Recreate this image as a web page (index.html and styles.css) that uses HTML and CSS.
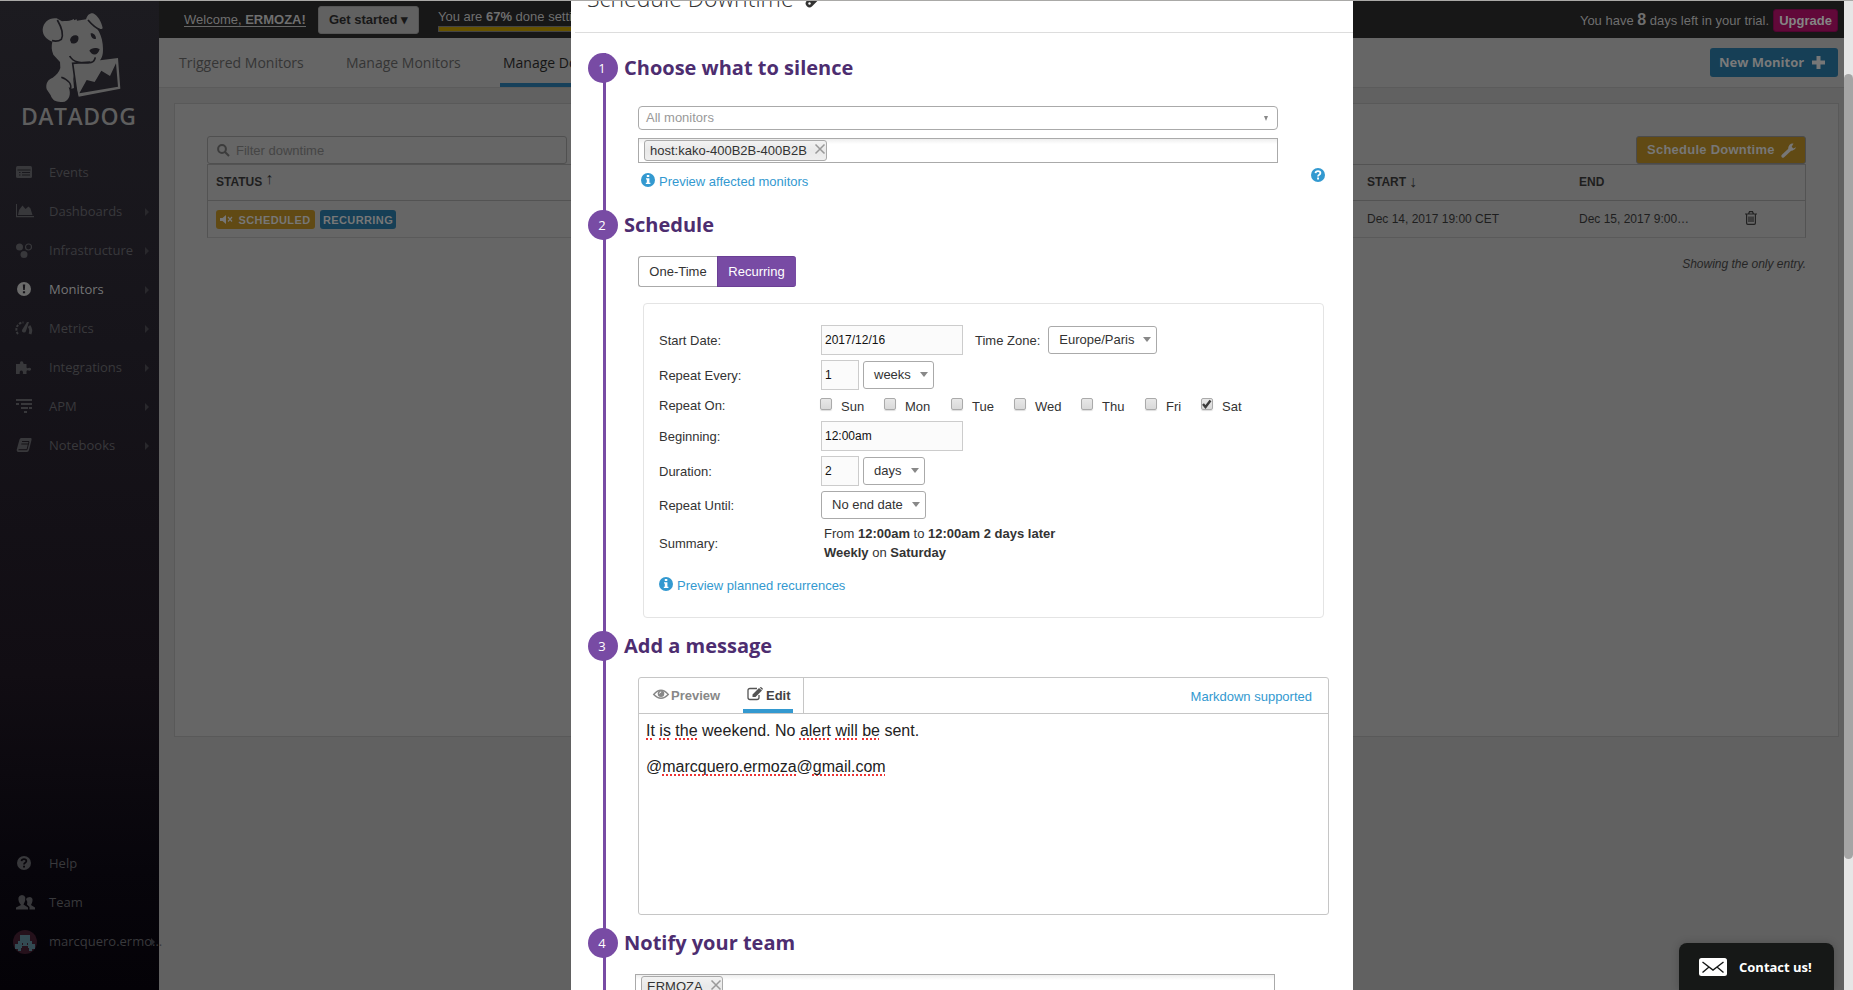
FILE: index.html
```
<!DOCTYPE html>
<html lang="en">
<head>
<meta charset="utf-8">
<title>Manage Downtime</title>
<link rel="stylesheet" href="styles.css">
</head>
<body>
<div class="app">
  <aside class="sidebar">
    <div class="brand">
      <svg class="dog" width="160" height="104" viewBox="0 0 480 312">
        <path fill="#5e5e5e" d="M128 88C130 66 148 52 170 55L186 64C196 62 205 64 215 60L222 57 222 61 230 58 231 62 258 58C262 46 268 39 279 40C293 46 305 66 308 84C306 90 298 86 290 84C300 98 306 114 308 132C310 154 310 168 300 181L354 174 361 266 236 290 219 226 222 264 215 266 206 262C214 282 208 300 194 305C172 308 158 304 152 286L140 268C136 250 144 238 158 233C168 226 178 216 181 204L180 186 160 164C154 150 154 138 157 125C138 118 128 106 128 88Z"/>
        <path fill="none" stroke="#1b1a1f" stroke-width="5" d="M172 60C186 84 190 106 184 118C176 124 166 124 156 122M264 60C274 72 286 84 302 90M184 232C206 240 216 254 211 268M209 168C218 186 244 192 274 187C280 186 284 180 286 172M232 291L218 190 270 186"/>
        <path fill="#1b1a1f" d="M210 120C212 106 228 102 235 110C238 126 226 132 214 130ZM272 100C280 98 288 106 288 116C280 120 272 112 272 100ZM268 152C274 142 290 142 299 147C296 162 284 168 274 160ZM238 280L260 240 284 246 304 212 330 228 348 190 354 260Z"/>
      </svg>
      <div class="wordmark">DATADOG</div>
    </div>
    <nav class="nav">
      <a class="item"><svg width="20" height="16"><rect x="0" y="1" width="16" height="12" rx="1.5"/><path d="M1.500 5h13M3 7.500h1.500M6 7.500h8M3 10h1.500M6 10h8" stroke="#19181d" fill="none"/></svg><span>Events</span></a>
      <a class="item more"><svg width="20" height="16"><path d="M0 0h1v12h17v1.200H0zM2 11L3 6 6.500 1.500 9.500 5 12.500 2.500 14.500 4.500 16.500 11z"/></svg><span>Dashboards</span></a>
      <a class="item more"><svg width="20" height="16"><circle cx="3.500" cy="4" r="3.500"/><circle cx="12.500" cy="4" r="3" fill="none" stroke="#38383b" stroke-width="1.200"/><circle cx="8" cy="11.500" r="3.500"/></svg><span>Infrastructure</span></a>
      <a class="item more active"><svg width="20" height="16"><circle cx="8" cy="7" r="7"/><path d="M6.800 2.500h2.400l-.4 5.500H7.200zM6.900 9.300h2.200v2H6.900z" fill="#17151a"/></svg><span>Monitors</span></a>
      <a class="item more"><svg width="20" height="16"><path d="M2 13A7 7 0 0 1 7.500 1.500" fill="none" stroke="#38383b" stroke-width="2" stroke-dasharray="2.500 1.200"/><path d="M13 5A8 8 0 0 1 14 13" fill="none" stroke="#38383b" stroke-width="3"/><path d="M11 1h2L10 10a2 2 0 0 1-4-1z"/></svg><span>Metrics</span></a>
      <a class="item more"><svg width="20" height="16"><path d="M0 4h3.500q1.200-.5.500-1.700A1.700 1.700 0 0 1 7.200 2.300Q6.800 3.500 8 4h2.500v3.500q.5 1.200 1.700.6 2.800-1 3 1.200-.5 2-2.700 1.200-1.500-.8-2 .8V14H7.300q-.8-.5-.3-1.500 0-2-1.700-2t-1.600 2q.5 1-.4 1.500H0z"/></svg><span>Integrations</span></a>
      <a class="item more"><svg width="20" height="16"><path d="M0 0h16v2H0zM0 4h3v2H0zM5 4h11v2H5zM5 8h7v2H5zM13 8h3v2h-3zM8 12h3v2H8z"/></svg><span>APM</span></a>
      <a class="item more"><svg width="20" height="16"><path d="M5 0h10q1 .5.500 2L13 12q-.5 2-2 2H2q-2-1-1-3.500L3.500 1.500Q4 0 5 0z"/><path d="M6 3.500h7M5.300 6h7M2.500 11.700h8.500l2-8" stroke="#151217" fill="none"/></svg><span>Notebooks</span></a>
    </nav>
    <nav class="nav bottom">
      <a class="item"><svg width="20" height="16"><circle cx="8" cy="7" r="7"/><path d="M5.500 5.200q.2-2 2.500-2t2.400 1.900q0 1-1.200 1.700T8 8.600" stroke="#08060b" stroke-width="1.700" fill="none"/><path d="M7.100 9.700H9v1.800H7.100z" fill="#08060b"/></svg><span>Help</span></a>
      <a class="item"><svg width="20" height="16"><path d="M0 14.500v-2l5-2.500C3 8 2 5 2.500 2.500Q3.200 0 6 0t3.300 2.500Q9.800 6 7.500 9.500l4.500 3v2zM10 4q1-2 4-2 3 .5 2.500 4-.5 2.500-1.500 4l4 2.500v2h-5.500V12L11 9.500Q12 7 10 4z"/></svg><span>Team</span></a>
      <a class="item more user"><svg class="avatar" width="24" height="24"><circle cx="12" cy="12" r="12" fill="#25111b"/><path fill="#334a52" d="M7 5h10v6h2v3h3v5h-3v2h-3v-3h-1v-2H9v2H8v3H5v-2H2v-5h3v-3h2z"/><path fill="#25111b" d="M9 13h1v2H9zM14 13h1v2h-1z"/></svg><span>marcquero.ermo...</span></a>
    </nav>
  </aside>

  <main class="main">
    <header class="topbar">
      <a class="welcome">Welcome, <b>ERMOZA!</b></a>
      <span class="started">Get started ▾</span>
      <div class="setup"><span>You are <b>67%</b> done setting up</span><div class="progress"></div></div>
      <div class="trial">You have <b>8</b> days left in your trial.</div>
      <span class="upgrade">Upgrade</span>
    </header>
    <div class="tabs">
      <a class="t1">Triggered Monitors</a><a class="t2">Manage Monitors</a><a class="t3">Manage Downtime</a>
      <span class="newmon">New Monitor <svg width="13" height="13"><path d="M4.500 0h4v4.500H13v4H8.500V13h-4V8.500H0v-4h4.500z" fill="#777"/></svg></span>
    </div>
    <section class="card">
      <div class="tools">
        <div class="filter"><svg width="13" height="13"><circle cx="5" cy="5" r="3.900"/><path d="M8 8l4 4"/></svg><span>Filter downtime</span></div>
        <span class="sched">Schedule Downtime <svg width="16" height="15"><path d="M2 13L9 6.500" stroke="#777" stroke-width="3.400" stroke-linecap="round"/><path d="M12.500.6A4.500 4.500 0 0 0 7.300 6 4.400 4.400 0 0 0 15 4.200L12.300 5.500 10.700 3.800z" fill="#777"/></svg></span>
      </div>
      <div class="row head"><div class="c1">STATUS <span class="arr up">↑</span></div><div class="c2">START <span class="arr">↓</span></div><div class="c3">END</div></div>
      <div class="row body">
        <div class="c1"><span class="badge gold"><svg width="14" height="10"><path d="M0 3h2.500L6 0v9L2.500 6H0z" fill="#777"/><path d="M8 2l4 4.500M12 2L8 6.500" stroke="#777" stroke-width="1.200"/></svg>SCHEDULED</span><span class="badge blue">RECURRING</span></div>
        <div class="c2">Dec 14, 2017 19:00 CET</div><div class="c3">Dec 15, 2017 9:00…</div>
        <div class="c4"><svg width="12" height="14" fill="none" stroke="#222" stroke-width="1.200"><path d="M0 3h12M3.500 3l1-2.300h3l1 2.300M1.600 3v9q0 1.400 1.200 1.400h6.400q1.200 0 1.200-1.400V3M4 5.500V11M6 5.500V11M8 5.500V11"/></svg></div>
      </div>
      <div class="only">Showing the only entry.</div>
    </section>
  </main>
  <div class="scroll"><div class="thumb"></div></div>
</div>

<div class="modal">
  <div class="mhead"><span>Schedule Downtime</span><svg width="18" height="20"><path d="M4.500 15.500L14 6" stroke="#333" stroke-width="7.500" stroke-linecap="round"/><circle cx="4.500" cy="15.500" r="1.200" fill="#fff"/></svg></div>
  <div class="steps">
    <section class="step s1"><div class="rail"><i>1</i></div><div class="content">
      <h2>Choose what to silence</h2>
      <div class="select2"><span>All monitors</span><em></em></div>
      <div class="tagbox"><span class="tag">host:kako-400B2B-400B2B<svg width="10" height="10"><path d="M.5.500l9 9M9.500.500l-9 9"/></svg></span></div>
      <div class="linkrow"><a class="link"><svg class="info" width="14" height="14"><circle cx="7" cy="7" r="7"/><path d="M5.800 2h2.500v2H5.800zM5 5.200h3.400v4.600h1V11H4.800V9.800h1V6.400H5z" fill="#fff"/></svg>Preview affected monitors</a>
      <svg class="help" width="14" height="14"><circle cx="7" cy="7" r="7"/><path d="M4.500 5.200q.2-2 2.500-2t2.400 1.900q0 1-1.200 1.700T7 8.600" stroke="#fff" stroke-width="1.800" fill="none"/><path d="M6.100 9.600H8v1.900H6.100z" fill="#fff"/></svg></div>
    </div></section>
    <section class="step s2"><div class="rail"><i>2</i></div><div class="content">
      <h2>Schedule</h2>
      <div class="toggle"><span>One-Time</span><span class="on">Recurring</span></div>
      <div class="panel">
        <div class="f"><label>Start Date:</label><span class="in wide">2017/12/16</span><span class="tz">Time Zone:</span><span class="dd tzs">Europe/Paris</span></div>
        <div class="f"><label>Repeat Every:</label><span class="in">1</span><span class="dd wk">weeks</span></div>
        <div class="f days"><label>Repeat On:</label>
          <span class="day d1"><i></i>Sun</span><span class="day d2"><i></i>Mon</span><span class="day d3"><i></i>Tue</span><span class="day d4"><i></i>Wed</span><span class="day d5"><i></i>Thu</span><span class="day d6"><i></i>Fri</span><span class="day d7"><i><svg width="10" height="10"><path d="M1 5l2.500 3L8.500 1.500" fill="none" stroke="#3c3c3c" stroke-width="2.400"/></svg></i>Sat</span></div>
        <div class="f"><label>Beginning:</label><span class="in wide">12:00am</span></div>
        <div class="f"><label>Duration:</label><span class="in">2</span><span class="dd dy">days</span></div>
        <div class="f until"><label>Repeat Until:</label><span class="dd end">No end date</span></div>
        <div class="f sum"><label>Summary:</label><p>From <b>12:00am</b> to <b>12:00am 2 days later</b><br><b>Weekly</b> on <b>Saturday</b></p></div>
        <a class="link plan"><svg class="info" width="14" height="14"><circle cx="7" cy="7" r="7"/><path d="M5.800 2h2.500v2H5.800zM5 5.200h3.400v4.600h1V11H4.800V9.800h1V6.400H5z" fill="#fff"/></svg>Preview planned recurrences</a>
      </div>
    </div></section>
    <section class="step s3"><div class="rail"><i>3</i></div><div class="content">
      <h2>Add a message</h2>
      <div class="editor">
        <div class="ebar">
          <div class="etabs">
            <span class="pv"><svg width="16" height="11"><path d="M.7 5.500Q8-3 15.300 5.500 8 13 .7 5.500z" fill="none" stroke="#888" stroke-width="1.400"/><circle cx="8" cy="4.700" r="3.300" fill="#888"/><path d="M6.500 4.500Q6.700 3 8.200 3" stroke="#fff" fill="none"/></svg>Preview</span>
            <span class="ed"><svg width="16" height="14"><path d="M10 1.500H3Q1 1.500 1 3.500v7q0 2 2 2h7q2 0 2-2V8" fill="none" stroke="#555" stroke-width="1.300"/><path d="M5.500 10V7.500L12 1l3 2.500L8.500 10zM12.700.500L14 0l2 1.800-.8 1.200z" fill="#555"/></svg>Edit</span>
          </div>
          <a class="link md">Markdown supported</a>
        </div>
        <div class="etext"><p><u>It</u> <u>is</u> <u>the</u> weekend. No <u>alert</u> <u>will</u> <u>be</u> sent.</p><p>@<u>marcquero.ermoza</u>@<u>gmail.com</u></p></div>
      </div>
    </div></section>
    <section class="step s4"><div class="rail"><i>4</i></div><div class="content">
      <h2>Notify your team</h2>
      <div class="tagbox team"><span class="tag">ERMOZA<svg width="10" height="10"><path d="M.5.500l9 9M9.500.500l-9 9"/></svg></span></div>
    </div></section>
  </div>
</div>
<div class="contact"><svg width="28" height="18"><rect width="28" height="18" rx="2.500" fill="#fff"/><path d="M3.500 4l10.500 8L24.500 4M3.500 14.500L10 9M24.500 14.500L18 9" fill="none" stroke="#161817" stroke-width="1.400"/></svg><span>Contact us!</span></div>
<div class="topline"></div>
</body>
</html>
```
FILE: styles.css
```
* { box-sizing: border-box; }
body { margin: 0; width: 1853px; height: 990px; overflow: hidden; position: relative; font: 13px/16px "Liberation Sans", Arial, sans-serif; color: #333; background: #616161; }
svg { display: block; flex: none; overflow: visible; }
.topline { position: absolute; left: 0; top: 0; width: 1853px; height: 1px; background: #aaa9a7; }
.app { display: flex; height: 990px; }

/* Sidebar */
.sidebar { width: 159px; display: flex; flex-direction: column; background: linear-gradient(#1c1b20 0, #16141a 35%, #110d13 68%, #07050b 88%, #040207 100%); }
.brand { height: 153px; }
.wordmark { font: 600 23px/24px "Open Sans", sans-serif; color: #5e5e5e; padding-left: 21px; letter-spacing: .5px; white-space: nowrap; }
.nav { font: 13px/39px "Open Sans", sans-serif; color: #39393c; }
.nav.bottom { margin-top: auto; height: 146px; }
.item { height: 39px; display: flex; align-items: center; padding-left: 16px; position: relative; fill: #38383b; white-space: nowrap; }
.item svg { margin-right: 13px; }
.item svg.avatar { margin: 0 12px 0 -3px; }
.item.active { color: #747475; fill: #6b6b6b; }
.more::after { content: ""; position: absolute; left: 145px; top: 16px; border: 4px solid transparent; border-left-color: #29282c; border-right: 0; }
.user.more::after { left: 151px; }

/* Page behind the dialog */
.main { width: 1685px; }
.topbar { height: 38px; background: #171717; display: flex; color: #6f6f6f; padding-right: 6px; white-space: nowrap; }
.welcome { margin: 12px 0 0 25px; height: 15px; width: 122px; border-bottom: 1px solid #666; }
.started { margin: 6px 0 0 12px; width: 101px; height: 28px; border-radius: 3px; background: #616161; border: 1px solid #555; color: #181818; font: bold 13px/26px "Liberation Sans", sans-serif; text-align: center; }
.setup { margin: 9px 0 0 19px; }
.progress { width: 220px; height: 6px; margin-top: 1px; background: #665200; border: 1px solid #444; }
.trial { margin: 12px 4px 0 auto; }
.trial b { font-size: 16px; }
.upgrade { margin-top: 9px; height: 23px; width: 65px; background: #610939; border: 1px solid #500531; border-radius: 3px; font-weight: bold; color: #858585; line-height: 21px; text-align: center; }
.tabs { height: 50px; background: #666; border-bottom: 1px solid #5b5b5b; display: flex; font: 14px/49px "Open Sans", sans-serif; color: #353535; position: relative; white-space: nowrap; }
.t1 { padding-left: 20px; width: 187px; }
.t2 { width: 154px; }
.t3 { width: 150px; padding-left: 3px; color: #151515; border-bottom: 4px solid #16405a; }
.newmon { margin: 10px 6px 0 auto; width: 128px; height: 29px; border-radius: 3px; background: #163f56; color: #7a7a7a; font: bold 13px/28px "Open Sans", sans-serif; display: flex; align-items: center; padding: 0 0 1px 9px; gap: 8px; }
.card { margin: 15px 0 0 15px; width: 1665px; height: 634px; background: #666; border: 1px solid #595959; padding: 32px 32px 0 32px; }
.tools { display: flex; justify-content: space-between; height: 28px; }
.filter { width: 360px; border: 1px solid #505050; border-radius: 3px; display: flex; align-items: center; padding: 1px 0 0 9px; gap: 6px; color: #454545; }
.filter svg { fill: none; stroke: #3c3c3c; stroke-width: 2; }
.sched { width: 170px; border: 1px solid #4b4b4b; border-radius: 3px; background: #614a14; color: #777; font: bold 13px/26px "Liberation Sans", sans-serif; letter-spacing: .25px; display: flex; align-items: center; padding-left: 10px; gap: 6px; }
.row { display: flex; border: 1px solid #535353; border-bottom: 0; font-size: 12px; color: #1e1e1e; width: 1599px; }
.head { height: 36px; line-height: 35px; font-weight: bold; }
.body { height: 38px; border-bottom: 1px solid #5a5a5a; line-height: 37px; }
.c1 { width: 1159px; padding-left: 8px; display: flex; }
.c2 { width: 212px; }
.c3 { width: 166px; }
.c4 { padding-top: 10px; }
.arr { font: 16px/34px "Liberation Sans", sans-serif; display: inline-block; width: 10px; text-align: center; }
.c2 .arr { margin-left: 1px; }
.head .c2 { display: flex; gap: 1px; }
.up { line-height: 28px; margin-left: 2px; }
.badge { margin: 9px 5px 0 0; height: 19px; border-radius: 3px; font: bold 11px/18px "Liberation Sans", sans-serif; letter-spacing: .4px; color: #777; display: flex; align-items: center; justify-content: center; }
.gold { width: 99px; background: #614a14; gap: 4px; }
.blue { width: 76px; background: #163f56; }
.only { text-align: right; font: italic 12px/16px "Liberation Sans", sans-serif; margin-top: 18px; color: #252525; }
.scroll { width: 9px; background: #e6e6e6; padding-top: 74px; }
.thumb { height: 785px; background: #a5a5a5; border-radius: 5px; }

/* Dialog */
.modal { position: absolute; left: 571px; top: 0; width: 782px; height: 990px; background: #fff; overflow: hidden; }
.mhead { height: 33px; margin-left: 4px; border-bottom: 1px solid #ddd; padding-left: 12px; display: flex; font: 300 23px/34px "Open Sans", sans-serif; gap: 11px; white-space: nowrap; }
.mhead span { margin-top: -19px; height: 34px; }
.mhead svg { margin-top: -12px; }
.steps { padding: 20px 0 0 17px; }
.step { display: flex; }
.s1 { height: 157px; }
.s2 { height: 421px; }
.s3 { height: 297px; }
.s4 { height: 62px; }
.rail { width: 30px; background: linear-gradient(#784ba4, #784ba4) 15px 0 / 3px 100% no-repeat; }
.rail i { display: block; width: 30px; height: 30px; border-radius: 50%; background: #784ba4; color: #fff; font: 13px/30px "Open Sans", sans-serif; text-align: center; padding-right: 2px; }
.content { width: 730px; padding-left: 20px; }
h2 { margin: 0 0 0 -14px; font: bold 20px/30px "Open Sans", sans-serif; color: #4d2d70; white-space: nowrap; }
.select2 { margin-top: 23px; width: 640px; height: 24px; border: 1px solid #aaa; border-radius: 4px; display: flex; justify-content: space-between; align-items: center; padding: 0 9px 0 7px; color: #999; }
.select2 em { border: 2.500px solid transparent; border-top: 5px solid #888; border-bottom: 0; }
.tagbox { margin-top: 8px; width: 640px; height: 25px; border: 1px solid #aaa; padding: 1px 5px; background: linear-gradient(#eee, #fff 5px); display: flex; }
.tag { height: 21px; border: 1px solid #aaa; border-radius: 3px; background: linear-gradient(#f2f2f2, #e9e9e9 50%, #eee); display: flex; padding: 0 1px 0 5px; line-height: 20px; gap: 8px; white-space: nowrap; }
.tag svg { margin-top: 3px; stroke: #999; stroke-width: 1.500; fill: none; }
.link { color: #3399d0; display: flex; gap: 4px; white-space: nowrap; }
.info, .help { fill: #3399d0; }
.linkrow { display: flex; justify-content: space-between; padding: 11px 23px 0 3px; }
.linkrow .info, .plan .info { margin-top: -1px; }
.linkrow .help { margin-top: -6px; }
.toggle { display: flex; margin-top: 16px; line-height: 29px; text-align: center; }
.toggle span { width: 79px; height: 31px; border: 1px solid #aaa; border-right: 0; border-radius: 3px 0 0 3px; }
.toggle .on { background: #784ba4; border-color: #6a3f94; color: #fff; border-radius: 0 3px 3px 0; padding-right: 1px; }
.panel { margin: 16px 0 0 5px; width: 681px; height: 315px; border: 1px solid #e4e4e4; border-radius: 4px; padding: 21px 0 0 15px; }
.f { display: flex; height: 30px; margin-bottom: 5px; line-height: 31px; white-space: nowrap; }
.f label { width: 162px; }
.in { width: 38px; height: 30px; border: 1px solid #ccc; background: #fbfbfb; font-size: 12px; line-height: 28px; padding-left: 3px; color: #111; }
.wide { width: 142px; }
.tz { margin: 0 8px 0 12px; }
.dd { position: relative; height: 28px; border: 1px solid #aaa; border-radius: 3px; line-height: 25px; padding-left: 10px; margin-top: 1px; }
.dd::after { content: ""; position: absolute; right: 5px; top: 10px; border: 4.500px solid transparent; border-top: 5px solid #888; border-bottom: 0; }
.tzs { width: 109px; margin-top: 1px; }
.wk { width: 71px; margin-left: 4px; }
.dy { width: 62px; margin-left: 4px; }
.end { width: 105px; margin-top: 0; }
.days { height: 26px; line-height: 21px; margin-bottom: 0; }
.day { display: flex; line-height: 23px; gap: 9px; }
.day i { width: 12px; height: 12px; margin-top: 3px; border: 1px solid #aaa; border-radius: 2px; background: linear-gradient(#e8e8e8, #d9d9d9); box-shadow: 0 1px 1px #ddd; }
.days label { width: 161px; }
.d1 { width: 64px; } .d2 { width: 67px; } .d3 { width: 63px; } .d4 { width: 67px; } .d5 { width: 64px; } .d6 { width: 56px; }
.until { height: 28px; margin-bottom: 0; line-height: 29px; }
.sum { height: 50px; margin: 5px 0 0; line-height: 40px; }
.sum p { margin: 0 0 0 3px; line-height: 19px; }
.plan { margin: 4px 0 0; }
.editor { margin-top: 16px; width: 691px; height: 238px; border: 1px solid #c6c6c6; border-radius: 3px; }
.ebar { height: 36px; border-bottom: 1px solid #c6c6c6; display: flex; justify-content: space-between; }
.etabs { width: 165px; border-right: 1px solid #c6c6c6; display: flex; font-weight: bold; line-height: 35px; }
.pv, .ed { display: flex; gap: 2px; }
.pv { width: 104px; padding-left: 14px; color: #888; }
.pv svg { margin-top: 11px; }
.ed { width: 50px; padding-left: 4px; color: #444; border-bottom: 4px solid #3399d0; gap: 3px; }
.ed svg { margin-top: 9px; }
.md { margin-right: 16px; line-height: 37px; }
.etext { padding: 8px 7px; font-size: 16px; line-height: 18px; color: #222; white-space: nowrap; }
.etext p { margin: 0 0 18px; }
.etext u { text-decoration: underline dotted #e33 1.500px; text-decoration-skip-ink: none; text-underline-offset: 2px; }
.team { margin: 16px 0 0 -3px; }

/* Chat button */
.contact { position: absolute; left: 1679px; top: 943px; width: 155px; height: 47px; border-radius: 8px 8px 0 0; background: #161817; color: #fff; box-shadow: 0 0 8px rgba(0,0,0,.2); display: flex; align-items: center; padding-left: 20px; gap: 12px; font: bold 13px/18px "Open Sans", sans-serif; white-space: nowrap; }
```
